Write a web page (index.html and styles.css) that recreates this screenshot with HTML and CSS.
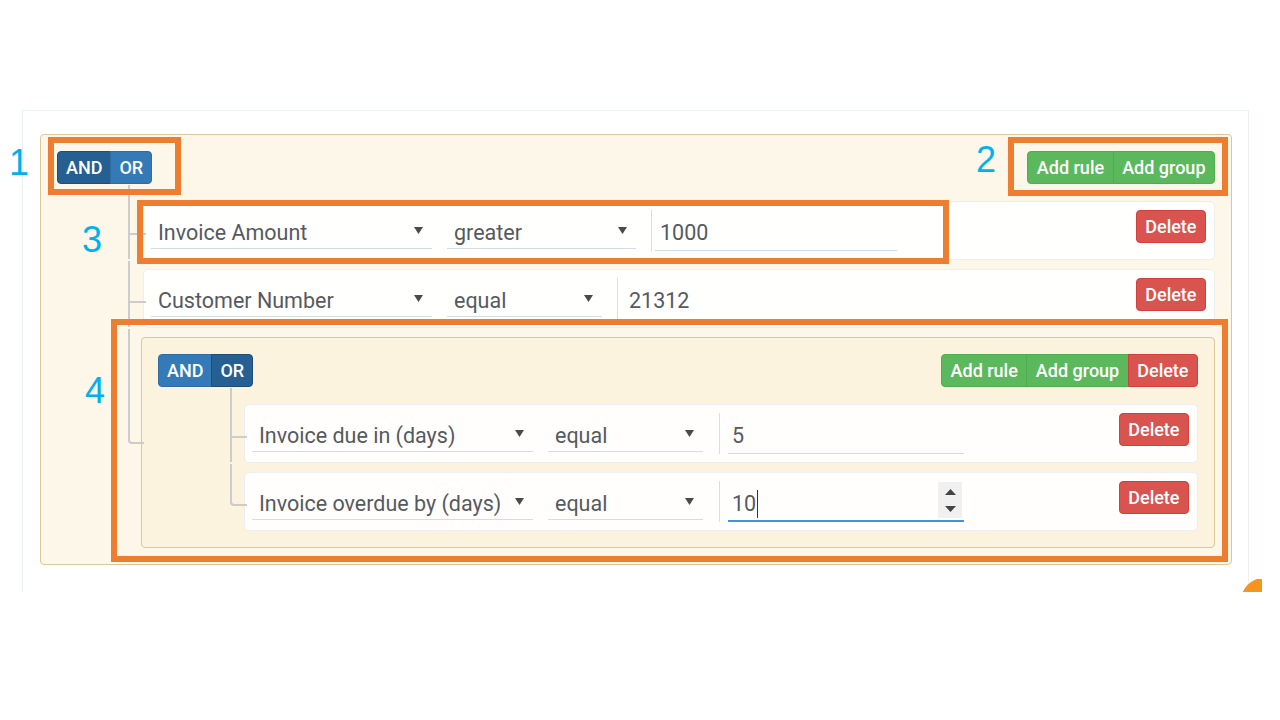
FILE: index.html
```html
<!DOCTYPE html>
<html>
<head>
<meta charset="utf-8">
<title>Query Builder</title>
<link rel="stylesheet" href="styles.css">
</head>
<body>
<div class="page">
  <div class="builder">
    <div class="group">
      <div class="group-header">
        <div class="btn-group">
          <span class="btn btn-cond active">AND</span>
          <span class="btn btn-cond">OR</span>
        </div>
        <div class="btn-group">
          <span class="btn btn-success">Add rule</span>
          <span class="btn btn-success">Add group</span>
        </div>
      </div>
      <div class="rules-list">
        <div class="rule">
          <div class="select filter"><span>Invoice Amount</span><svg class="caret" width="9" height="7" viewBox="0 0 9 7"><polygon points="0,0 9,0 4.5,7"/></svg></div>
          <div class="select operator wide"><span>greater</span><svg class="caret" width="9" height="7" viewBox="0 0 9 7"><polygon points="0,0 9,0 4.5,7"/></svg></div>
          <div class="value value-a"><div class="input input-wide">1000</div></div>
          <span class="btn btn-danger btn-del">Delete</span>
        </div>
        <div class="rule">
          <div class="select filter"><span>Customer Number</span><svg class="caret" width="9" height="7" viewBox="0 0 9 7"><polygon points="0,0 9,0 4.5,7"/></svg></div>
          <div class="select operator"><span>equal</span><svg class="caret" width="9" height="7" viewBox="0 0 9 7"><polygon points="0,0 9,0 4.5,7"/></svg></div>
          <div class="value value-b"><div class="input input-wide input-plain">21312</div></div>
          <span class="btn btn-danger btn-del">Delete</span>
        </div>
        <div class="group nested">
          <div class="group-header">
            <div class="btn-group">
              <span class="btn btn-cond">AND</span>
              <span class="btn btn-cond active">OR</span>
            </div>
            <div class="btn-group">
              <span class="btn btn-success">Add rule</span>
              <span class="btn btn-success">Add group</span>
              <span class="btn btn-danger">Delete</span>
            </div>
          </div>
          <div class="rules-list">
            <div class="rule">
              <div class="select filter"><span>Invoice due in (days)</span><svg class="caret" width="9" height="7" viewBox="0 0 9 7"><polygon points="0,0 9,0 4.5,7"/></svg></div>
              <div class="select operator"><span>equal</span><svg class="caret" width="9" height="7" viewBox="0 0 9 7"><polygon points="0,0 9,0 4.5,7"/></svg></div>
              <div class="value value-c"><div class="input">5</div></div>
              <span class="btn btn-danger btn-del">Delete</span>
            </div>
            <div class="rule">
              <div class="select filter"><span>Invoice overdue by (days)</span><svg class="caret" width="9" height="7" viewBox="0 0 9 7"><polygon points="0,0 9,0 4.5,7"/></svg></div>
              <div class="select operator"><span>equal</span><svg class="caret" width="9" height="7" viewBox="0 0 9 7"><polygon points="0,0 9,0 4.5,7"/></svg></div>
              <div class="value value-c"><div class="input focused">10<span class="cursor"></span><span class="spinner"><svg width="24" height="36" viewBox="0 0 24 36"><polygon points="7,13 18,13 12.5,7"/><polygon points="7,24 18,24 12.5,30"/></svg></span></div></div>
              <span class="btn btn-danger btn-del">Delete</span>
            </div>
          </div>
        </div>
      </div>
    </div>
  </div>
</div>

<div class="annot annot-1"></div>
<div class="annot annot-2"></div>
<div class="annot annot-3"></div>
<div class="annot annot-4"></div>
<div class="label label-1">1</div>
<div class="label label-2">2</div>
<div class="label label-3">3</div>
<div class="label label-4">4</div>
<div class="blob"><div class="blob-circle"></div></div>
</body>
</html>
```

FILE: styles.css
```css
* { box-sizing: border-box; }
html, body { margin: 0; padding: 0; background: #fff; }
body {
  position: relative;
  width: 1280px;
  height: 720px;
  overflow: hidden;
  font-family: Roboto, "Liberation Sans", sans-serif;
}

.page { padding: 110px 0 0 22px; }

.builder {
  width: 1227px;
  height: 482px;
  border: 1px solid #ebf0f0;
  border-bottom: none;
  padding: 23px 16px 0 17px;
}

.group {
  background: rgba(250, 240, 210, 0.5);
  border: 1px solid #dcc896;
  border-radius: 4px;
  padding: 16px;
}

.group-header {
  display: flex;
  justify-content: space-between;
  align-items: flex-start;
  margin-bottom: 17px;
}

.rules-list {
  display: flex;
  flex-direction: column;
  gap: 9px;
  padding-left: 86px;
}

/* buttons */
.btn-group { display: flex; }
.btn {
  display: inline-block;
  height: 33px;
  line-height: 31px;
  padding: 0 8.5px;
  font-size: 18px;
  font-weight: 500;
  color: #fff;
  border: 1px solid transparent;
  white-space: nowrap;
}
.btn-group .btn + .btn { margin-left: -1px; }
.btn-group .btn:first-child { border-radius: 4px 0 0 4px; }
.btn-group .btn:last-child { border-radius: 0 4px 4px 0; }
.btn-cond { background: #337ab7; border-color: #2e6da4; padding: 0 8px; }
.btn-cond.active { background: #265f91; border-color: #204d74; }
.btn-success { background: #5cb85c; border-color: #4cae4c; }
.btn-danger { background: #d9534f; border-color: #d43f3a; }
.btn-del { margin-left: auto; border-radius: 4px; }

/* rules */
.rule {
  position: relative;
  display: flex;
  align-items: flex-start;
  height: 59px;
  padding: 8px 8px 0 7px;
  background: rgba(255, 255, 255, 0.92);
  border: 1px solid #eeeeee;
  border-radius: 5px;
}

.select {
  display: flex;
  align-items: center;
  justify-content: space-between;
  margin-top: 7px;
  height: 32px;
  padding: 0 9px 0 7px;
  border-bottom: 1px solid #d3dee3;
  font-size: 21.5px;
  line-height: 30px;
  color: #555a60;
  white-space: nowrap;
}
.caret { fill: #4a4a4a; margin-bottom: 5px; flex: none; }
.filter { width: 281px; }
.operator { width: 155px; margin-left: 15px; }
.operator.wide { width: 189px; }

.value {
  height: 41px;
  margin-left: 15px;
  border-left: 1px solid #dddddd;
}
.value-a { padding-left: 3px; }
.value-b { padding-left: 6px; }
.value-c { margin-left: 16px; padding-left: 8px; }

.input {
  position: relative;
  width: 236px;
  height: 41px;
  padding: 8px 4px 0;
  border-bottom: 1px solid #cfdde3;
  font-size: 21.5px;
  line-height: 30px;
  color: #555a60;
}
.input-wide { width: 242px; padding-left: 5px; }
.input-plain { border-bottom-color: transparent; }
.input.focused { border-bottom: 2px solid #4a90d9; }
.cursor {
  display: inline-block;
  width: 1px;
  height: 28px;
  margin-left: 1px;
  background: #333;
  vertical-align: -7px;
}
.spinner {
  position: absolute;
  right: 2px;
  top: 1px;
  width: 24px;
  height: 36px;
  background: #f0f0f0;
}
.spinner svg { display: block; fill: #444; }

/* tree connectors */
.rules-list > * { position: relative; }
.rules-list > *::before,
.rules-list > *::after {
  content: "";
  position: absolute;
  left: -16px;
  width: 16px;
  border: 0 solid #cccccc;
}
.rules-list > *::before {
  top: -9px;
  height: calc(50% + 11px);
  border-width: 0 0 2px 2px;
}
.rules-list > *:first-child::before {
  top: -17px;
  height: calc(50% + 19px);
}
.rules-list > *::after {
  top: 50%;
  height: 50%;
  border-width: 0 0 0 2px;
}
.rules-list > *:last-child::before { border-radius: 0 0 0 4px; }
.rules-list > *:last-child::after { display: none; }

.group.nested { margin-left: -2px; }
.rules-list > .group.nested::before {
  left: -14px;
  width: 14px;
  height: 113px;
}
.nested .rules-list > *::before,
.nested .rules-list > *::after {
  left: -15px;
  width: 15px;
}

/* annotations */
.annot {
  position: absolute;
  border: 6px solid #ed7d31;
}
.annot-1 { left: 48px; top: 137px; width: 133px; height: 58px; }
.annot-2 { left: 1008px; top: 137px; width: 220px; height: 59px; }
.annot-3 { left: 137px; top: 200px; width: 812px; height: 64px; }
.annot-4 { left: 111px; top: 319px; width: 1117px; height: 243px; }

.label {
  position: absolute;
  font-family: "Liberation Sans", Arial, sans-serif;
  font-size: 36px;
  line-height: 36px;
  color: #00b0f0;
}
.label-1 { left: 9px; top: 145px; }
.label-2 { left: 976px; top: 142px; }
.label-3 { left: 82px; top: 222px; }
.label-4 { left: 85px; top: 373px; }

.blob {
  position: absolute;
  left: 1243px;
  top: 579px;
  width: 19px;
  height: 13px;
  overflow: hidden;
}
.blob-circle {
  position: absolute;
  left: -2px;
  top: -1px;
  width: 46px;
  height: 46px;
  border-radius: 50%;
  background: #f5941f;
}
```
